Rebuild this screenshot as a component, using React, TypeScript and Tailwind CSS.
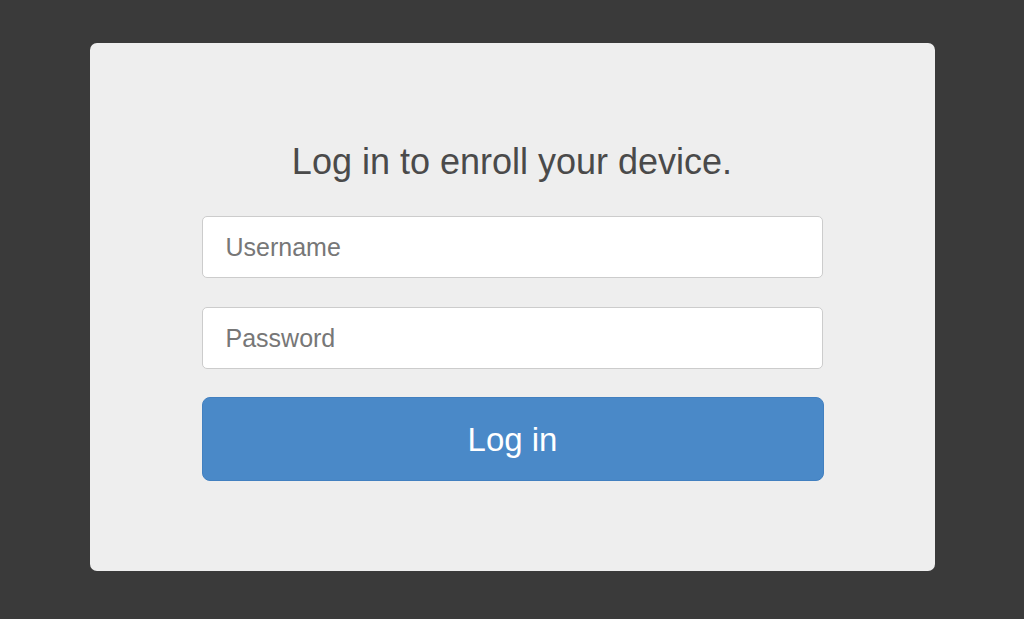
import React from "react";

export default function App() {
  return (
    <div className="w-[1024px] h-[619px] bg-[#3a3a3a] flex justify-center pt-[43px] overflow-hidden" style={{ fontFamily: '"Liberation Sans", Arial, sans-serif' }}>
      <div className="w-[845px] h-[528px] bg-[#eeeeee] rounded-[7px] flex flex-col items-center pt-[97px]">
        <h1 className="text-[36px] leading-[44px] text-[#4a4a4a] font-normal tracking-[0px]">Log in to enroll your device.</h1>
        <div className="w-[621px] flex flex-col mt-[32px]">
          <input
            type="text"
            placeholder="Username"
            className="h-[62px] w-full bg-white border border-[#cccccc] rounded-[5px] px-[23px] text-[25px] text-[#555] placeholder:text-[#777777] outline-none"
          />
          <input
            type="password"
            placeholder="Password"
            className="h-[62px] w-full bg-white border border-[#cccccc] rounded-[5px] px-[23px] text-[25px] text-[#555] placeholder:text-[#777777] outline-none mt-[29px]"
          />
          <button className="h-[84px] w-[622px] mt-[28px] bg-[#4a89c8] border border-[#4280c0] rounded-[8px] text-white text-[33px] leading-none">
            Log in
          </button>
        </div>
      </div>
    </div>
  );
}
